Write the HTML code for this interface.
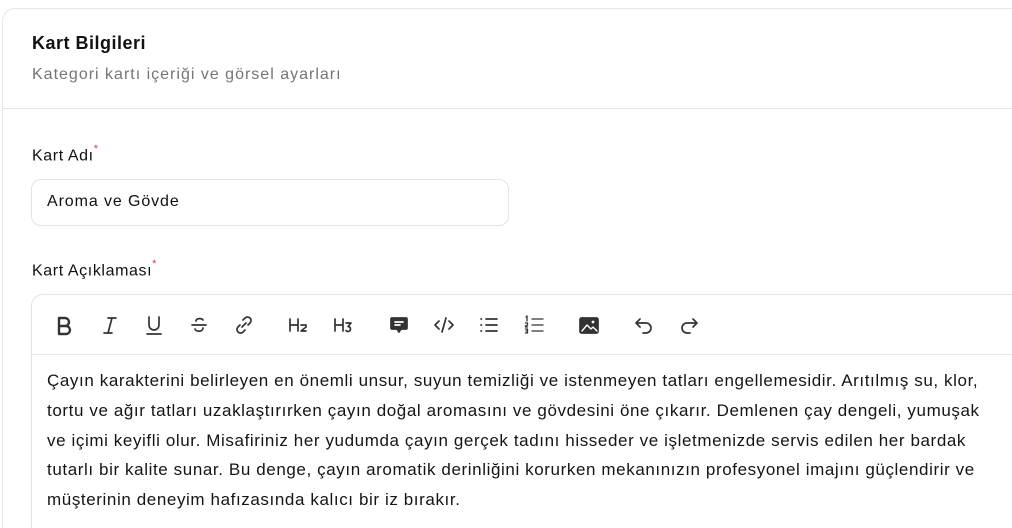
<!DOCTYPE html>
<html><head><meta charset="utf-8"><style>
*{box-sizing:border-box;margin:0;padding:0}
html,body{width:1012px;height:528px;overflow:hidden}
body{background:#fff;font-family:"Liberation Sans",sans-serif;position:relative;color:#111}
.card{position:absolute;left:2px;top:8px;width:1100px;height:600px;border:1px solid #e6e6e6;border-radius:13px}
.hdr{position:absolute;left:2px;top:108px;width:1100px;border-top:1px solid #e4e4e4}
.t{position:absolute;font-size:18px;font-weight:bold;left:32px;top:33px;letter-spacing:0.5px}
.s{position:absolute;font-size:16px;color:#757575;left:32px;top:66px;letter-spacing:1px}
.l{position:absolute;left:32px;font-size:16px;color:#111;letter-spacing:0.6px}
.l sup{color:#e53935;font-size:11px;position:relative;top:-2px}
.inp{position:absolute;left:31px;top:179px;width:478px;height:47px;border:1px solid #e2e2e2;border-radius:10px;font-size:16px;letter-spacing:0.9px;padding:13px 0 0 15px}
.ed{position:absolute;left:31px;top:294px;width:1100px;height:300px;border:1px solid #e2e2e2;border-radius:12px}
.tb{position:absolute;left:31px;top:354px;width:1100px;border-top:1px solid #e8e8e8}
svg.i{position:absolute;top:314px;width:22px;height:22px;fill:none;stroke:#333;stroke-width:1.7;stroke-linecap:round;stroke-linejoin:round}
.txt{position:absolute;left:47px;top:366px;white-space:nowrap;font-size:17px;letter-spacing:0.6px;line-height:29.8px;color:#151515}
</style></head><body>
<div class="card"></div><div class="hdr"></div>
<div class="t">Kart Bilgileri</div>
<div class="s">Kategori kartı içeriği ve görsel ayarları</div>
<div class="l" style="top:145px">Kart Adı<sup>*</sup></div>
<div class="inp">Aroma ve Gövde</div>
<div class="l" style="top:260px">Kart Açıklaması<sup>*</sup></div>
<div class="ed"></div><div class="tb"></div>
<svg class="i" style="left:53px" viewBox="0 0 22 22"><path d="M6 4h6a4 4 0 0 1 0 8H6zM6 12h7a4 4 0 0 1 0 8H6z" stroke-width="2.4"/></svg>
<svg class="i" style="left:99px" viewBox="0 0 22 22"><path d="M9 4h8M5 19h8M13 4l-4 15"/></svg>
<svg class="i" style="left:143px" viewBox="0 0 22 22"><path d="M6 3v8a5 5 0 0 0 10 0V3M4 20h14"/></svg>
<svg class="i" style="left:188px" viewBox="0 0 22 22"><path d="M4 11h14M15 6c-1-2-7-2-7 1M7 15c1 3 8 3 8-1"/></svg>
<svg class="i" style="left:233px" viewBox="0 0 22 22"><path d="M9 13l4-4M10 6l2-2a3.5 3.5 0 0 1 5 5l-2 2M12 16l-2 2a3.5 3.5 0 0 1-5-5l2-2"/></svg>
<svg class="i" style="left:288px" viewBox="0 0 22 22"><path d="M2 5v12M10 5v12M2 11h8M13 11h5v2l-5 4h5"/></svg>
<svg class="i" style="left:333px" viewBox="0 0 22 22"><path d="M2 5v12M10 5v12M2 11h8M13 9h5l-3 3.5a2.5 2.5 0 1 1-2 4"/></svg>
<svg class="i" style="left:388px" viewBox="0 0 22 22"><path d="M4 4h14a1 1 0 0 1 1 1v9a1 1 0 0 1-1 1h-5l-2 3-2-3H4a1 1 0 0 1-1-1V5a1 1 0 0 1 1-1z" fill="#333"/><path d="M7 8h8M7 11h5" stroke="#fff"/></svg>
<svg class="i" style="left:433px" viewBox="0 0 22 22"><path d="M6 7l-4 4 4 4M16 7l4 4-4 4M13 4l-4 14"/></svg>
<svg class="i" style="left:478px" viewBox="0 0 22 22"><path d="M8 5h11M8 11h11M8 17h11M3 5h.5M3 11h.5M3 17h.5"/></svg>
<svg class="i" style="left:523px" viewBox="0 0 22 22"><path d="M9 5h11M9 11h11M9 17h11M3 3l1-1v5M2.5 9h2v2l-2 1v1h2M2.5 15h2v4h-2M3 17h1.5" stroke-width="1.3"/></svg>
<svg class="i" style="left:578px" viewBox="0 0 22 22"><rect x="2" y="4" width="18" height="15" rx="1.5" fill="#333"/><path d="M4 17l5-6 4 4 2-2 4 4" stroke="#fff" stroke-width="1.4"/><circle cx="15" cy="8" r="1.4" fill="#fff" stroke="none"/></svg>
<svg class="i" style="left:633px" viewBox="0 0 22 22"><path d="M7 5L3 9l4 4M3 9h10a5 5 0 0 1 0 10h-3"/></svg>
<svg class="i" style="left:678px" viewBox="0 0 22 22"><path d="M15 5l4 4-4 4M19 9H9a5 5 0 0 0 0 10h3"/></svg>
<div class="txt">Çayın karakterini belirleyen en önemli unsur, suyun temizliği ve istenmeyen tatları engellemesidir. Arıtılmış su, klor,<br>tortu ve ağır tatları uzaklaştırırken çayın doğal aromasını ve gövdesini öne çıkarır. Demlenen çay dengeli, yumuşak<br>ve içimi keyifli olur. Misafiriniz her yudumda çayın gerçek tadını hisseder ve işletmenizde servis edilen her bardak<br>tutarlı bir kalite sunar. Bu denge, çayın aromatik derinliğini korurken mekanınızın profesyonel imajını güçlendirir ve<br>müşterinin deneyim hafızasında kalıcı bir iz bırakır.</div>
</body></html>
